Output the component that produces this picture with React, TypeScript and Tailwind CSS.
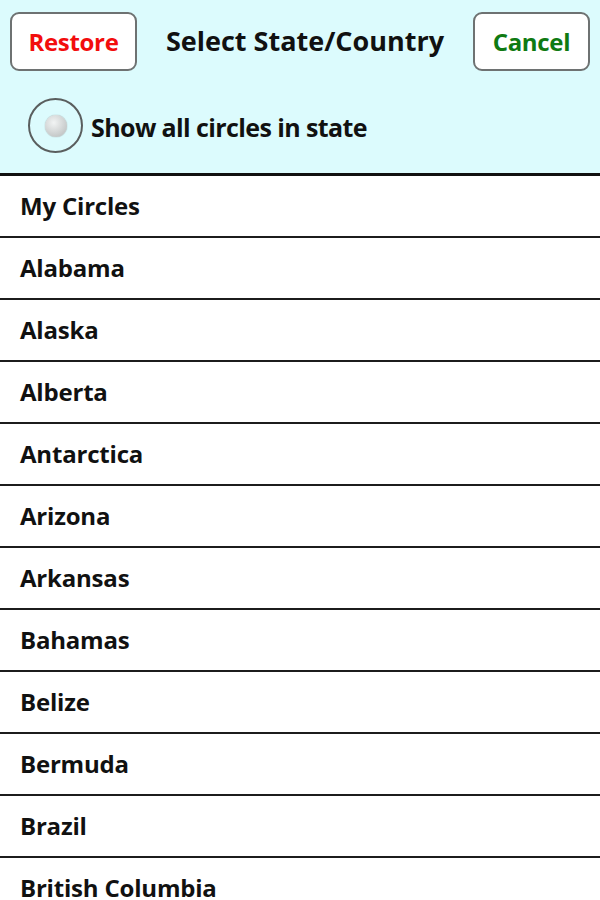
const ITEMS = [
  'My Circles',
  'Alabama',
  'Alaska',
  'Alberta',
  'Antarctica',
  'Arizona',
  'Arkansas',
  'Bahamas',
  'Belize',
  'Bermuda',
  'Brazil',
  'British Columbia',
]

export default function App() {
  return (
    <div className="h-[900px] w-[600px] overflow-hidden bg-white font-['Open_Sans',sans-serif]">
      {/* header */}
      <div className="h-[176px] border-b-[3px] border-[#111] bg-[#dcfbfd] px-[10px] pt-[12px]">
        <div className="flex items-center justify-between">
          <button className="flex h-[59px] w-[127px] items-center justify-center rounded-[9px] border-2 border-[#6e7272] bg-white text-[24px] font-bold tracking-[-0.3px] text-[#f20d0d]">
            Restore
          </button>
          <p className="text-[27px] font-bold text-[#111]">Select State/Country</p>
          <button className="flex h-[59px] w-[117px] items-center justify-center rounded-[9px] border-2 border-[#6e7272] bg-white text-[24px] font-bold tracking-[-0.3px] text-[#0f7a12]">
            Cancel
          </button>
        </div>
        <div className="mt-[27px] ml-[18px] flex items-center gap-[8px]">
          <div className="flex h-[55px] w-[55px] items-center justify-center rounded-full border-2 border-[#5a5e5e]">
            <div className="h-[22px] w-[22px] rounded-full bg-[radial-gradient(circle_at_40%_35%,#f2f4f4,#b4b8b8)] shadow-[0_0_1px_#888]" />
          </div>
          <span className="mt-[4px] text-[25px] font-bold tracking-[-0.6px] text-[#111]">Show all circles in state</span>
        </div>
      </div>

      {/* list */}
      {ITEMS.map(name => (
        <div key={name} className="flex h-[62px] items-center border-b-2 border-[#1c1c1c] pl-[20px]">
          <span className="text-[24px] font-bold tracking-[-0.2px] text-[#111]">{name}</span>
        </div>
      ))}
    </div>
  )
}
